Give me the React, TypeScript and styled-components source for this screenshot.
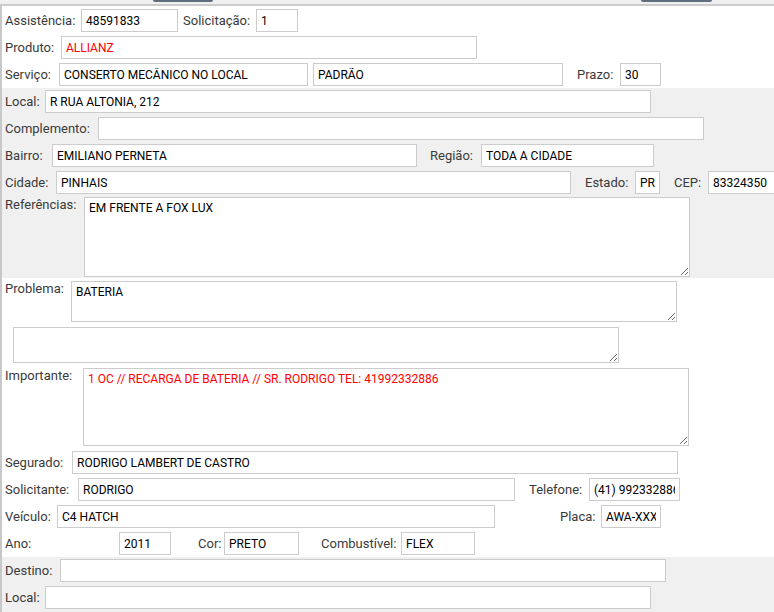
import React from "react";
import styled, { createGlobalStyle } from "styled-components";

const Global = createGlobalStyle`
  html, body { margin: 0; padding: 0; overflow: hidden; background: #fff; }
  body { font-family: Roboto, "Liberation Sans", sans-serif; }
  * { box-sizing: border-box; }
`;

const Page = styled.div`
  width: 774px;
  height: 612px;
  overflow: hidden;
`;

const TopBar = styled.div`
  height: 4px;
  background: #f0f0f0;
  display: flex;
  align-items: flex-start;
  padding-left: 153px;
`;

const TabStub = styled.div<{ $w: number; $ml?: number }>`
  width: ${(p) => p.$w}px;
  margin-left: ${(p) => p.$ml ?? 0}px;
  height: 2px;
  background: #5d6e7e;
  border-radius: 0 0 3px 3px;
`;

const Panel = styled.div`
  border-top: 2px solid #cccccc;
  border-left: 2px solid #c8c8c8;
  width: 900px;
  height: 620px;
`;

const Band = styled.div<{ $gray?: boolean; $pt?: number }>`
  background: ${(p) => (p.$gray ? "#f0f0f0" : "#ffffff")};
  padding: ${(p) => p.$pt ?? 0}px 0 0 3px;
  display: flex;
  flex-direction: column;
`;

const Row = styled.div`
  height: 27px;
  display: flex;
  align-items: center;
  white-space: nowrap;
`;

const AreaRow = styled.div<{ $pt?: number; $pb?: number }>`
  display: flex;
  align-items: flex-start;
  padding-top: ${(p) => p.$pt ?? 0}px;
  padding-bottom: ${(p) => p.$pb ?? 0}px;
`;

const Label = styled.label<{ $w: number; $ml?: number }>`
  flex: none;
  width: ${(p) => p.$w}px;
  margin-left: ${(p) => p.$ml ?? 0}px;
  font-family: Roboto, "Liberation Sans", sans-serif;
  font-size: 13px;
  line-height: 16px;
  color: #3a3a3a;
  white-space: nowrap;
`;

const Input = styled.input<{ $w: number; $ml?: number; $red?: boolean }>`
  flex: none;
  width: ${(p) => p.$w}px;
  margin: 0 0 0 ${(p) => p.$ml ?? 0}px;
  height: 23px;
  border: 1px solid #cccccc;
  border-radius: 0;
  background: #fff;
  padding: 0 4px;
  font-family: Roboto, "Liberation Sans", sans-serif;
  font-size: 12px;
  color: ${(p) => (p.$red ? "#ff0000" : "#000000")};
  outline: none;
`;

const Area = styled.textarea<{ $w: number; $h: number; $ml?: number; $red?: boolean }>`
  flex: none;
  display: block;
  width: ${(p) => p.$w}px;
  height: ${(p) => p.$h}px;
  margin: 0 0 0 ${(p) => p.$ml ?? 0}px;
  border: 1px solid #cccccc;
  border-radius: 0;
  background: #fff;
  padding: 3px 4px;
  font-family: Roboto, "Liberation Sans", sans-serif;
  font-size: 12px;
  line-height: 15px;
  color: ${(p) => (p.$red ? "#ff0000" : "#000000")};
  outline: none;
`;

export default function App() {
  return (
    <Page>
      <Global />
      <TopBar>
        <TabStub $w={60} />
        <TabStub $w={71} $ml={428} />
      </TopBar>
      <Panel>
        <Band $pt={1}>
          <Row>
            <Label $w={76}>Assistência:</Label>
            <Input $w={97} defaultValue="48591833" readOnly />
            <Label $w={73} $ml={5}>Solicitação:</Label>
            <Input $w={42} defaultValue="1" readOnly />
          </Row>
          <Row>
            <Label $w={56}>Produto:</Label>
            <Input $w={416} $red defaultValue="ALLIANZ" readOnly />
          </Row>
          <Row>
            <Label $w={54}>Serviço:</Label>
            <Input $w={249} defaultValue="CONSERTO MECÂNICO NO LOCAL" readOnly />
            <Input $w={250} $ml={5} defaultValue="PADRÃO" readOnly />
            <Label $w={43} $ml={14}>Prazo:</Label>
            <Input $w={41} defaultValue="30" readOnly />
          </Row>
        </Band>
        <Band $gray>
          <Row>
            <Label $w={40}>Local:</Label>
            <Input $w={606} defaultValue="R RUA ALTONIA, 212" readOnly />
          </Row>
          <Row>
            <Label $w={93}>Complemento:</Label>
            <Input $w={606} defaultValue="" readOnly />
          </Row>
          <Row>
            <Label $w={47}>Bairro:</Label>
            <Input $w={365} defaultValue="EMILIANO PERNETA" readOnly />
            <Label $w={51} $ml={13}>Região:</Label>
            <Input $w={173} defaultValue="TODA A CIDADE" readOnly />
          </Row>
          <Row>
            <Label $w={51}>Cidade:</Label>
            <Input $w={515} defaultValue="PINHAIS" readOnly />
            <Label $w={50} $ml={14}>Estado:</Label>
            <Input $w={25} defaultValue="PR" readOnly />
            <Label $w={34} $ml={14}>CEP:</Label>
            <Input $w={90} defaultValue="83324350" readOnly />
          </Row>
          <AreaRow $pt={1} $pb={1}>
            <Label $w={79}>Referências:</Label>
            <Area $w={606} $h={80} defaultValue="EM FRENTE A FOX LUX" readOnly />
          </AreaRow>
        </Band>
        <Band>
          <AreaRow $pt={3}>
            <Label $w={66}>Problema:</Label>
            <Area $w={606} $h={41} defaultValue="BATERIA" readOnly />
          </AreaRow>
          <AreaRow $pt={5}>
            <Area $w={606} $h={36} $ml={8} defaultValue="" readOnly />
          </AreaRow>
          <AreaRow $pt={5} $pb={3}>
            <Label $w={78}>Importante:</Label>
            <Area
              $w={606}
              $h={78}
              $red
              defaultValue="1 OC // RECARGA DE BATERIA // SR. RODRIGO TEL: 41992332886"
              readOnly
            />
          </AreaRow>
          <Row>
            <Label $w={67}>Segurado:</Label>
            <Input $w={606} defaultValue="RODRIGO LAMBERT DE CASTRO" readOnly />
          </Row>
          <Row>
            <Label $w={73}>Solicitante:</Label>
            <Input $w={437} defaultValue="RODRIGO" readOnly />
            <Label $w={60} $ml={14}>Telefone:</Label>
            <Input $w={91} defaultValue="(41) 992332886" readOnly />
          </Row>
          <Row>
            <Label $w={52}>Veículo:</Label>
            <Input $w={438} defaultValue="C4 HATCH" readOnly />
            <Label $w={41} $ml={65}>Placa:</Label>
            <Input $w={60} defaultValue="AWA-XXXX" readOnly />
          </Row>
          <Row>
            <Label $w={114}>Ano:</Label>
            <Input $w={52} defaultValue="2011" readOnly />
            <Label $w={26} $ml={27}>Cor:</Label>
            <Input $w={75} defaultValue="PRETO" readOnly />
            <Label $w={80} $ml={22}>Combustível:</Label>
            <Input $w={74} defaultValue="FLEX" readOnly />
          </Row>
        </Band>
        <Band $gray>
          <Row>
            <Label $w={55}>Destino:</Label>
            <Input $w={606} defaultValue="" readOnly />
          </Row>
          <Row>
            <Label $w={40}>Local:</Label>
            <Input $w={606} defaultValue="" readOnly />
          </Row>
          <Row />
        </Band>
      </Panel>
    </Page>
  );
}
